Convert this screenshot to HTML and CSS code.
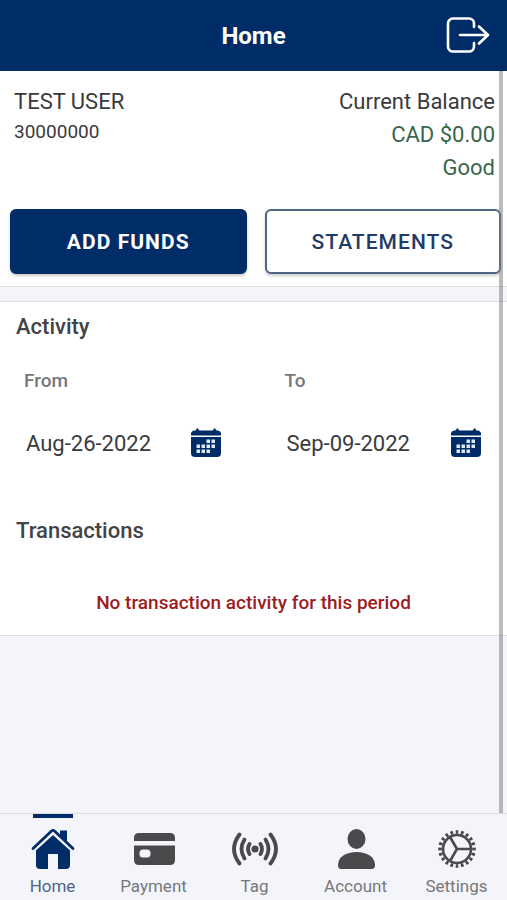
FILE: index.html
```html
<!DOCTYPE html>
<html lang="en">
<head>
  <meta charset="utf-8">
  <meta name="viewport" content="width=device-width, initial-scale=1">
  <title>Home</title>
  <link rel="stylesheet" href="styles.css">
</head>
<body>
  <svg class="sprite" aria-hidden="true">
    <symbol id="calendar" viewBox="0 0 30 30">
      <path d="M0 7.500V6Q0 2.500 4 2.500H4.500L6.200 0L8.500 2.500H21.500L23.800 0L25.500 2.500H26Q30 2.500 30 6V7.500Z"/>
      <path d="M0 9H30V25Q30 29 26 29H4Q0 29 0 25Z"/>
      <path class="calendar-days" d="M15.500 11.500h3.500v3.500h-3.500zM20.500 11.500h3.500v3.500h-3.500zM5.500 16.500h3.500v3.500h-3.500zM10.500 16.500h3.500v3.500h-3.500zM15.500 16.500h3.500v3.500h-3.500zM20.500 16.500h3.500v3.500h-3.500zM5.500 21.500h3.500v3.500h-3.500zM10.500 21.500h3.500v3.500h-3.500zM15.500 21.500h3.500v3.500h-3.500z"/>
    </symbol>
  </svg>

  <header class="topbar">
    <h1 class="topbar-title">Home</h1>
    <button class="logout" type="button" aria-label="Log out">
      <svg width="44" height="38" viewBox="0 0 44 38" fill="none" stroke="currentColor" stroke-width="2.600" stroke-linecap="round" stroke-linejoin="round">
        <path d="M28 10V6.500A5 5 0 0 0 23 1.500H7A5 5 0 0 0 2 6.500V29.500A5 5 0 0 0 7 34.500H23A5 5 0 0 0 28 29.500V26"/>
        <path d="M14 18H42M33 9.500L42 18L33 26.500"/>
      </svg>
    </button>
  </header>

  <main class="content">
    <section class="card account">
      <div class="summary">
        <div>
          <p class="line">TEST USER</p>
          <p class="line number">30000000</p>
        </div>
        <div class="balance">
          <p class="line">Current Balance</p>
          <p class="line good">CAD $0.00</p>
          <p class="line good">Good</p>
        </div>
      </div>
      <div class="actions">
        <button class="action primary" type="button">ADD FUNDS</button>
        <button class="action" type="button">STATEMENTS</button>
      </div>
    </section>

    <section class="card activity">
      <h2 class="heading">Activity</h2>
      <div class="dates">
        <div class="date">
          <label class="date-label" for="from">From</label>
          <div class="date-row">
            <input class="date-input" id="from" type="text" value="Aug-26-2022">
            <button class="date-button" type="button" aria-label="Choose start date"><svg width="30" height="30"><use href="#calendar"/></svg></button>
          </div>
        </div>
        <div class="date">
          <label class="date-label" for="to">To</label>
          <div class="date-row">
            <input class="date-input" id="to" type="text" value="Sep-09-2022">
            <button class="date-button" type="button" aria-label="Choose end date"><svg width="30" height="30"><use href="#calendar"/></svg></button>
          </div>
        </div>
      </div>
      <h2 class="heading">Transactions</h2>
      <p class="empty">No transaction activity for this period</p>
    </section>
    <div class="scroll-thumb"></div>
  </main>

  <nav class="tabs">
    <a class="tab active" href="#home">
      <svg width="44" height="44" viewBox="0 0 44 44" fill="currentColor">
        <path d="M29 3.500H36V17L29 10.500Z"/>
        <path d="M22 7.500L39 22V38Q39 42 35 42H27V27H17V42H9Q5 42 5 38V22Z"/>
        <path d="M2 23L22 5L42 23" fill="none" stroke="#f3f5fa" stroke-width="4.500"/>
        <path d="M2 21.500L20.500 4Q22 2.800 23.500 4L42 21.500" fill="none" stroke="currentColor" stroke-width="2.800" stroke-linecap="round"/>
      </svg>
      <span>Home</span>
    </a>
    <a class="tab" href="#payment">
      <svg width="44" height="44" viewBox="0 0 44 44" fill="currentColor">
        <path d="M2 14V11Q2 6 7 6H38Q43 6 43 11V14Z"/>
        <path fill-rule="evenodd" d="M2 18.500H43V33Q43 38 38 38H7Q2 38 2 33ZM11 22.500Q7.500 22.500 7.500 26V27Q7.500 30.500 11 30.500H15Q18.500 30.500 18.500 27V26Q18.500 22.500 15 22.500Z"/>
      </svg>
      <span>Payment</span>
    </a>
    <a class="tab" href="#tag">
      <svg width="48" height="44" viewBox="0 0 48 44" fill="none" stroke="currentColor" stroke-width="3.800" stroke-linecap="round">
        <circle cx="24" cy="22" r="3.600" fill="currentColor" stroke="none"/>
        <path d="M18.500 17Q15.500 22 18.500 27M13.500 12.500Q7.500 22 13.500 31.500M8.500 7.500Q-2.500 22 8.500 36.500M29.500 17Q32.500 22 29.500 27M34.500 12.500Q40.500 22 34.500 31.500M39.500 7.500Q50.500 22 39.500 36.500"/>
      </svg>
      <span>Tag</span>
    </a>
    <a class="tab" href="#account">
      <svg width="44" height="44" viewBox="0 0 44 44" fill="currentColor">
        <ellipse cx="22.500" cy="12" rx="9" ry="10"/>
        <path d="M4 38C4 30 12 25 22.500 25S41 30 41 38Q41 42 38 42H7Q4 42 4 38Z"/>
      </svg>
      <span>Account</span>
    </a>
    <a class="tab" href="#settings">
      <svg width="44" height="44" viewBox="0 0 44 44" fill="none" stroke="currentColor">
        <circle cx="22" cy="22" r="14" stroke-width="2.600"/>
        <circle cx="22" cy="22" r="17" stroke-width="3.600" pathLength="80" stroke-dasharray="2 2" stroke-dashoffset="1"/>
        <path d="M22 22H36M22 22L15 10M22 22L15 34" stroke-width="2.600"/>
      </svg>
      <span>Settings</span>
    </a>
  </nav>
</body>
</html>
```

FILE: styles.css
```css
* {
  box-sizing: border-box;
}

body {
  margin: 0;
  min-height: 100vh;
  display: flex;
  flex-direction: column;
  background: #f3f5fa;
  color: #3a3a3c;
  font-family: Roboto, sans-serif;
  font-size: 22px;
}

h1, h2, p {
  margin: 0;
}

button, input {
  font: inherit;
  color: inherit;
}

.sprite {
  position: absolute;
  width: 0;
  height: 0;
}

.topbar {
  display: grid;
  grid-template-columns: 1fr auto 1fr;
  align-items: center;
  height: 71px;
  padding: 0 17px;
  background: #002d67;
  color: #fff;
}

.topbar-title {
  grid-column: 2;
  font-size: 24px;
  font-weight: 700;
}

.logout {
  justify-self: end;
  display: flex;
  padding: 0;
  border: 0;
  background: none;
}

.content {
  position: relative;
  flex: 1;
  display: flex;
  flex-direction: column;
  gap: 14px;
}

.card {
  background: #fff;
  border-bottom: 1px solid #dcdde1;
}

.account {
  padding: 14px 6px 12px 10px;
}

.summary {
  display: flex;
  justify-content: space-between;
  padding: 0 6px 0 4px;
}

.line {
  line-height: 33px;
}

.number {
  font-size: 19px;
  line-height: 28px;
}

.balance {
  text-align: right;
}

.good {
  color: #39664b;
}

.actions {
  display: grid;
  grid-template-columns: 1fr 1fr;
  gap: 18px;
  margin-top: 25px;
}

.action {
  height: 65px;
  border: 2px solid #4f6587;
  border-radius: 6px;
  background: #fff;
  color: #1f3c69;
  font-size: 21px;
  font-weight: 500;
  letter-spacing: 0.05em;
  box-shadow: 0 2px 3px #0003;
}

.primary {
  border-color: #002d67;
  background: #002d67;
  color: #fff;
  font-weight: 700;
}

.activity {
  border-top: 1px solid #dcdde1;
  padding: 8px 0 17px;
}

.heading {
  padding: 0 16px;
  color: #444446;
  font-size: 22px;
  font-weight: 500;
  line-height: 34px;
}

.dates {
  display: grid;
  grid-template-columns: 1fr 1fr;
  gap: 64px;
  padding: 22px 26px 54px 24px;
}

.date-label {
  display: block;
  color: #77777a;
  font-size: 19px;
  font-weight: 500;
  line-height: 30px;
}

.date-row {
  display: flex;
  align-items: center;
  justify-content: space-between;
  margin-top: 30px;
}

.date-input {
  width: 136px;
  height: 34px;
  padding: 0 2px;
  border: 0;
  background: none;
}

.date-button {
  display: flex;
  padding: 0;
  border: 0;
  background: none;
}

.date-button svg {
  fill: #002d67;
}

.calendar-days {
  fill: #dfe8f6;
}

.empty {
  margin-top: 40px;
  color: #9b1c22;
  font-size: 19px;
  font-weight: 500;
  line-height: 30px;
  text-align: center;
}

.scroll-thumb {
  position: absolute;
  top: 0;
  right: 4px;
  bottom: 0;
  width: 4px;
  background: #77777a80;
}

.tabs {
  display: grid;
  grid-template-columns: repeat(5, 1fr);
  height: 87px;
  padding-left: 2px;
  border-top: 1px solid #dcdde1;
}

.tab {
  position: relative;
  display: flex;
  flex-direction: column;
  align-items: center;
  padding-top: 13px;
  color: #4a4a4c;
  font-size: 17px;
  line-height: 30px;
  text-decoration: none;
}

.tab span {
  color: #77777a;
}

.active {
  color: #002d67;
}

.active span {
  color: #4f6587;
}

.active::before {
  content: "";
  position: absolute;
  top: 0;
  width: 40px;
  height: 4px;
  background: #002d67;
}
```
